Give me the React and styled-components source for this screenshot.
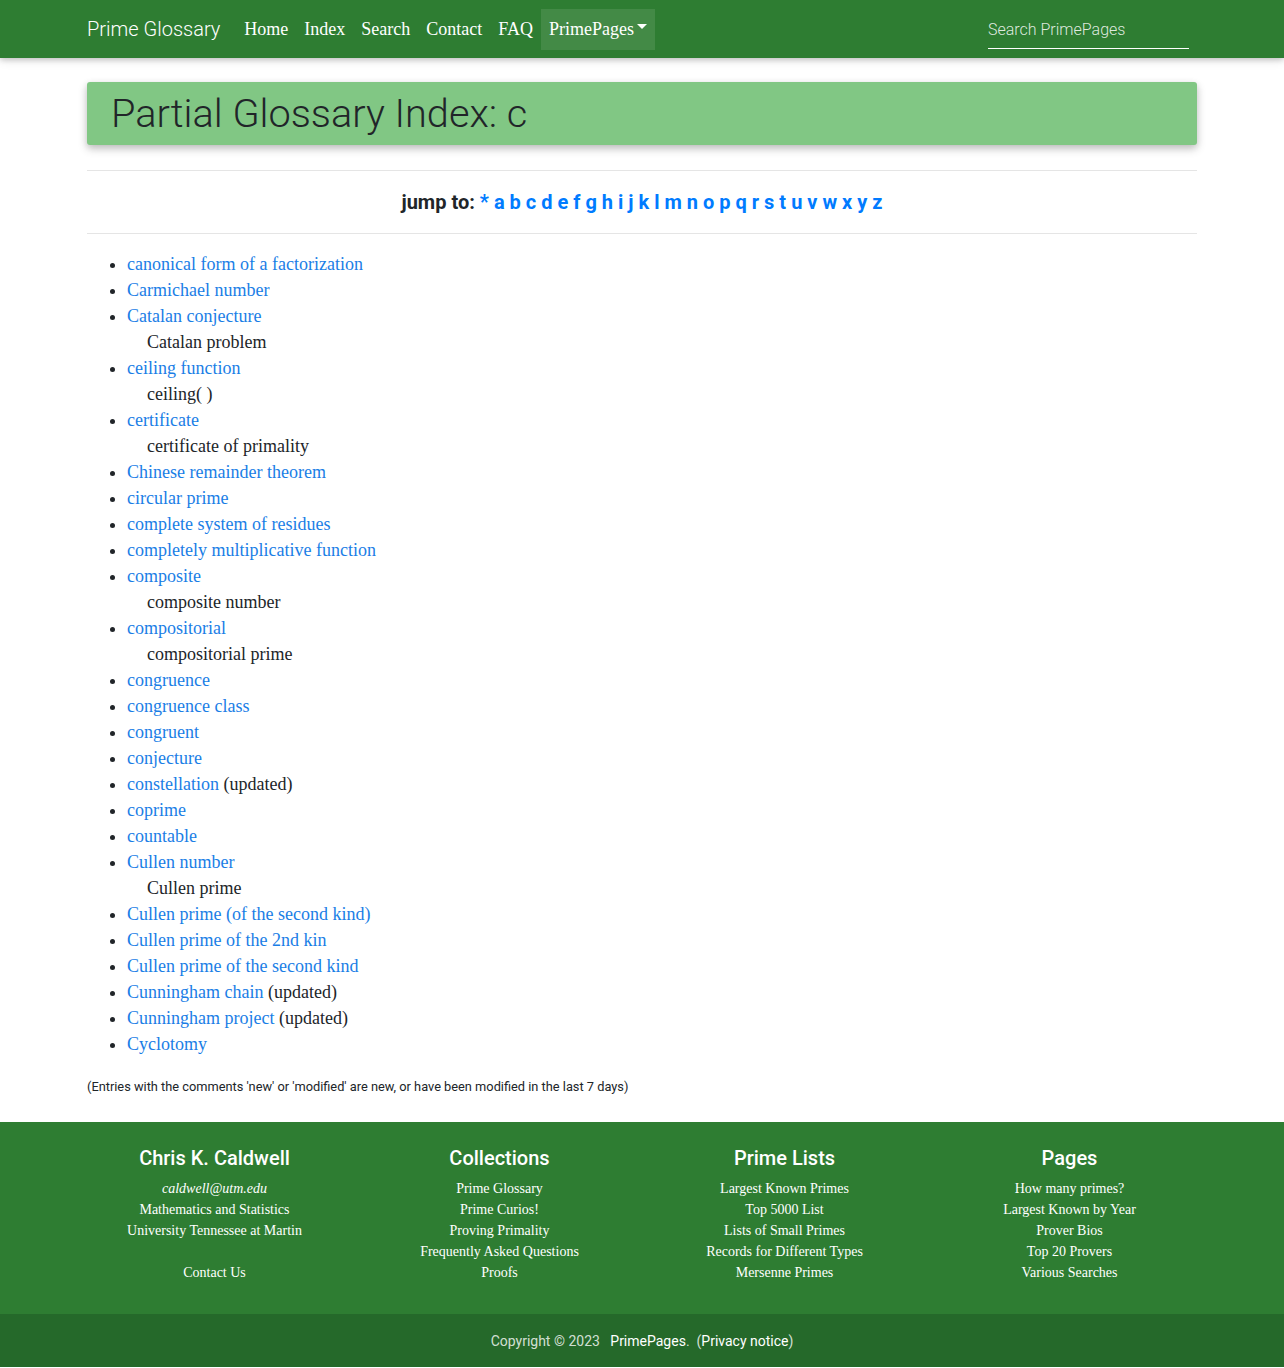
import React from "react";
import styled, { createGlobalStyle } from "styled-components";

const Global = createGlobalStyle`
  html, body { margin: 0; padding: 0; background: #fff; }
  body { font-family: Roboto, "Liberation Sans", sans-serif; color: #212529; }
  * { box-sizing: border-box; }
`;

const Nav = styled.nav`
  height: 58px;
  background: #2e7d32;
  box-shadow: 0 2px 5px rgba(0,0,0,0.16), 0 2px 10px rgba(0,0,0,0.12);
  position: relative;
  z-index: 2;
`;
const NavInner = styled.div`
  width: 1110px;
  margin: 0 auto;
  height: 100%;
  display: flex;
  align-items: center;
`;
const Brand = styled.a`
  font-family: Roboto, sans-serif;
  font-weight: 300;
  font-size: 20px;
  color: #fff;
  text-decoration: none;
  margin-right: 16px;
`;
const NavLinks = styled.div`
  display: flex;
  align-items: center;
`;
const NavLink = styled.a`
  font-family: "Liberation Serif", serif;
  font-size: 18px;
  color: #fff;
  text-decoration: none;
  padding: 0 8px;
  height: 41px;
  display: flex;
  align-items: center;
  gap: 3px;
  background: ${(p) => (p.$active ? "rgba(255,255,255,0.1)" : "transparent")};
`;
const Caret = styled.span`
  display: inline-block;
  width: 0;
  height: 0;
  border-left: 5px solid transparent;
  border-right: 5px solid transparent;
  border-top: 5px solid #fff;
  margin-top: -6px;
`;
const SearchBox = styled.input`
  margin-left: auto;
  margin-right: 8px;
  width: 201px;
  height: 34px;
  background: transparent;
  border: none;
  border-bottom: 1px solid #fff;
  color: #fff;
  font-family: Roboto, sans-serif;
  font-weight: 300;
  font-size: 16px;
  padding: 0 0 5px;
  margin-top: 6px;
  outline: none;
  &::placeholder { color: rgba(255,255,255,0.85); }
`;

const Container = styled.main`
  width: 1110px;
  margin: 0 auto;
  padding-top: 24px;
`;
const Jumbo = styled.div`
  background: #81c784;
  border-radius: 3px;
  height: 63px;
  padding: 0 24px;
  margin-bottom: 25px;
  display: flex;
  align-items: center;
  box-shadow: 0 4px 10px rgba(0,0,0,0.2), 0 2px 6px rgba(0,0,0,0.1);
`;
const Title = styled.h1`
  margin: 0;
  font-family: Roboto, sans-serif;
  font-weight: 300;
  font-size: 39.7px;
  color: #212529;
  line-height: 1;
`;
const Rule = styled.hr`
  border: none;
  border-top: 1px solid rgba(0,0,0,0.1);
  margin: 0;
`;
const JumpRow = styled.div`
  text-align: center;
  font-family: Roboto, sans-serif;
  font-weight: 700;
  font-size: 20px;
  padding: 19px 0 18px;
  line-height: 25px;
`;
const Letter = styled.a`
  color: #007bff;
  text-decoration: none;
`;
const List = styled.ul`
  margin: 17px 0 22px;
  padding-left: 40px;
  font-family: "Liberation Serif", serif;
  font-size: 18px;
  line-height: 26px;
  color: #212529;
`;
const Item = styled.li``;
const TermLink = styled.a`
  color: #1a7ee6;
  text-decoration: none;
`;
const Sub = styled.div`
  padding-left: 20px;
`;
const Note = styled.p`
  margin: 0;
  font-family: Roboto, sans-serif;
  font-size: 12.8px;
  line-height: 16px;
  color: #212529;
`;

const Footer = styled.footer`
  margin-top: 27px;
  background: #2e7d32;
  color: #fff;
`;
const FooterCols = styled.div`
  width: 1140px;
  margin: 0 auto;
  display: grid;
  grid-template-columns: repeat(4, 1fr);
  padding: 22px 0 31px;
`;
const Col = styled.div`
  text-align: center;
`;
const ColTitle = styled.h5`
  margin: 0 0 6px;
  font-family: Roboto, sans-serif;
  font-weight: 500;
  font-size: 20px;
  line-height: 28px;
`;
const ColLine = styled.div`
  font-family: "Liberation Serif", serif;
  font-size: 14px;
  line-height: 21px;
  min-height: 21px;
  font-style: ${(p) => (p.$italic ? "italic" : "normal")};
`;
const Bottom = styled.div`
  background: #25692a;
  height: 53px;
  display: flex;
  align-items: center;
  justify-content: center;
  font-family: Roboto, sans-serif;
  font-size: 14px;
  color: rgba(255,255,255,0.8);
`;
const BottomLink = styled.a`
  color: #fff;
  text-decoration: none;
`;

const letters = ["*", ..."abcdefghijklmnopqrstuvwxyz".split("")];

const entries = [
  { t: "canonical form of a factorization" },
  { t: "Carmichael number" },
  { t: "Catalan conjecture", sub: "Catalan problem" },
  { t: "ceiling function", sub: "ceiling( )" },
  { t: "certificate", sub: "certificate of primality" },
  { t: "Chinese remainder theorem" },
  { t: "circular prime" },
  { t: "complete system of residues" },
  { t: "completely multiplicative function" },
  { t: "composite", sub: "composite number" },
  { t: "compositorial", sub: "compositorial prime" },
  { t: "congruence" },
  { t: "congruence class" },
  { t: "congruent" },
  { t: "conjecture" },
  { t: "constellation", note: "(updated)" },
  { t: "coprime" },
  { t: "countable" },
  { t: "Cullen number", sub: "Cullen prime" },
  { t: "Cullen prime (of the second kind)" },
  { t: "Cullen prime of the 2nd kin" },
  { t: "Cullen prime of the second kind" },
  { t: "Cunningham chain", note: "(updated)" },
  { t: "Cunningham project", note: "(updated)" },
  { t: "Cyclotomy" },
];

const cols = [
  { title: "Chris K. Caldwell", lines: [{ t: "caldwell@utm.edu", i: true }, { t: "Mathematics and Statistics" }, { t: "University Tennessee at Martin" }, { t: "" }, { t: "Contact Us" }] },
  { title: "Collections", lines: [{ t: "Prime Glossary" }, { t: "Prime Curios!" }, { t: "Proving Primality" }, { t: "Frequently Asked Questions" }, { t: "Proofs" }] },
  { title: "Prime Lists", lines: [{ t: "Largest Known Primes" }, { t: "Top 5000 List" }, { t: "Lists of Small Primes" }, { t: "Records for Different Types" }, { t: "Mersenne Primes" }] },
  { title: "Pages", lines: [{ t: "How many primes?" }, { t: "Largest Known by Year" }, { t: "Prover Bios" }, { t: "Top 20 Provers" }, { t: "Various Searches" }] },
];

export default function App() {
  return (
    <>
      <Global />
      <Nav>
        <NavInner>
          <Brand href="#">Prime Glossary</Brand>
          <NavLinks>
            <NavLink href="#">Home</NavLink>
            <NavLink href="#">Index</NavLink>
            <NavLink href="#">Search</NavLink>
            <NavLink href="#">Contact</NavLink>
            <NavLink href="#">FAQ</NavLink>
            <NavLink href="#" $active>PrimePages<Caret /></NavLink>
          </NavLinks>
          <SearchBox placeholder="Search PrimePages" />
        </NavInner>
      </Nav>
      <Container>
        <Jumbo>
          <Title>Partial Glossary Index: c</Title>
        </Jumbo>
        <Rule />
        <JumpRow>
          jump to:{" "}
          {letters.map((l, i) => (
            <React.Fragment key={l}>
              <Letter href="#">{l}</Letter>
              {i < letters.length - 1 ? " " : ""}
            </React.Fragment>
          ))}
        </JumpRow>
        <Rule />
        <List>
          {entries.map((e) => (
            <Item key={e.t}>
              <TermLink href="#">{e.t}</TermLink>
              {e.note ? <> {e.note}</> : null}
              {e.sub ? <Sub>{e.sub}</Sub> : null}
            </Item>
          ))}
        </List>
        <Note>(Entries with the comments 'new' or 'modified' are new, or have been modified in the last 7 days)</Note>
      </Container>
      <Footer>
        <FooterCols>
          {cols.map((c) => (
            <Col key={c.title}>
              <ColTitle>{c.title}</ColTitle>
              {c.lines.map((l, i) => (
                <ColLine key={i} $italic={l.i}>{l.t}</ColLine>
              ))}
            </Col>
          ))}
        </FooterCols>
        <Bottom>
          Copyright © 2023&nbsp;&nbsp;&nbsp;<BottomLink href="#">PrimePages</BottomLink>.&nbsp;&nbsp;(<BottomLink href="#">Privacy notice</BottomLink>)
        </Bottom>
      </Footer>
    </>
  );
}
